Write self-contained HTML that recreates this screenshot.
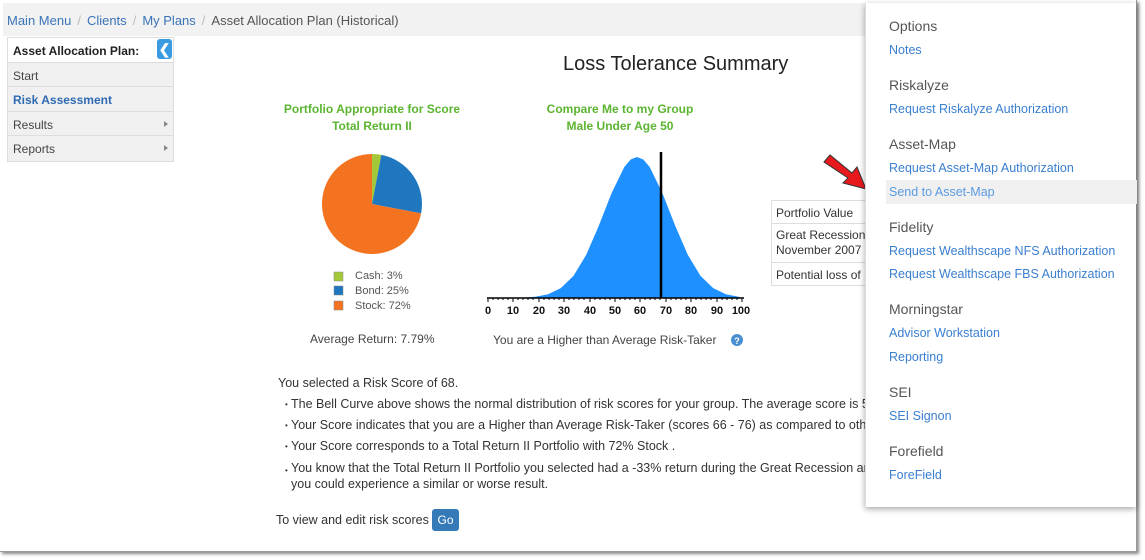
<!DOCTYPE html>
<html><head><meta charset="utf-8"><style>
*{box-sizing:border-box;margin:0;padding:0}
body{width:1145px;height:560px;background:#fff;font-family:"Liberation Sans",sans-serif;position:relative;overflow:hidden;color:#333}
.frame{position:absolute;left:0;top:0;width:1137px;height:552px;background:#fff;box-shadow:2px 2px 3px #888;border-right:1px solid #999;border-bottom:1px solid #999}
.bc{position:absolute;left:3px;top:3px;width:1130px;height:33px;background:#f2f2f2;font-size:13px;padding:10px 0 0 4px;color:#555}
.bc a{color:#3a74b8;text-decoration:none}.bc span{color:#bbb;margin:0 6px}
.side{position:absolute;left:7px;top:37px;width:167px;border:1px solid #ddd}
.side div{height:24.5px;border-bottom:1px solid #ddd;background:#f0f0f0;font-size:12px;padding:6px 0 0 5px;color:#444;position:relative}
.side div.h{background:#fff;font-weight:bold;color:#222}
.side .tri{position:absolute;right:5px;top:9px;border-left:4px solid #888;border-top:3px solid transparent;border-bottom:3px solid transparent;width:0;height:0;padding:0}
.back{position:absolute;right:1px;top:1px;width:15px;height:20px;background:#3a9be0;border-radius:3px;color:#fff;font-size:14px;text-align:center;line-height:20px}
.t{position:absolute;font-size:12px;color:#333;white-space:nowrap}
.g{color:#5cb531;font-weight:bold;font-size:12px;text-align:center;position:absolute;line-height:17px}
.panel{position:absolute;left:865px;top:3px;width:271px;height:504px;background:#fff;box-shadow:0 2px 6px rgba(0,0,0,.35);border-left:1px solid #ddd}
.panel .s{position:absolute;left:23px;font-size:14px;color:#555}
.panel .l{position:absolute;left:23px;font-size:12.5px;color:#3a7fd0}
.li{position:absolute;left:278px;font-size:12.5px;color:#333;white-space:nowrap}
.li:before{content:"•";position:absolute;left:-6px;font-size:8px;top:3px}
</style></head><body>
<div class="frame"></div>
<div class="bc"><a>Main Menu</a><span>/</span><a>Clients</a><span>/</span><a>My Plans</a><span>/</span>Asset Allocation Plan (Historical)</div>
<div class="side">
<div class="h">Asset Allocation Plan:<span class="back">&#10094;</span></div>
<div>Start</div>
<div style="color:#2f6bb3;font-weight:bold">Risk Assessment</div>
<div>Results<span class="tri"></span></div>
<div style="border-bottom:none">Reports<span class="tri"></span></div>
</div>
<div class="t" style="left:563px;top:53px;font-size:20px;color:#222">Loss Tolerance Summary</div>
<div class="g" style="left:272px;top:101px;width:200px">Portfolio Appropriate for Score<br>Total Return II</div>
<div class="g" style="left:520px;top:101px;width:200px">Compare Me to my Group<br>Male Under Age 50</div>
<svg style="position:absolute;left:0;top:0" width="1145" height="560">
<path d="M372,204 L372,154 A50,50 0 0 1 381.4,154.9Z" fill="#a3c93a"/>
<path d="M372,204 L381.4,154.9 A50,50 0 0 1 421.1,213.4Z" fill="#1f77c0"/>
<path d="M372,204 L421.1,213.4 A50,50 0 1 1 372,154Z" fill="#f37321"/>
<rect x="334" y="272" width="9" height="9" fill="#a3c93a" stroke="#888" stroke-width=".5"/>
<rect x="334" y="286" width="9" height="9" fill="#1f77c0" stroke="#888" stroke-width=".5"/>
<rect x="334" y="301" width="9" height="9" fill="#f37321" stroke="#888" stroke-width=".5"/>
<polyline fill="#1e90ff" stroke="none" points="500,298 522.7,297.6 535.4,296.8 548.1,294.2 560.8,288.1 573.5,275.9 586.2,254.9 598.9,225.5 611.6,193.1 624.3,167 630.65,159.5 637,157 643.35,159.5 649.7,167 662.4,193.1 675.1,225.5 687.8,254.9 700.5,275.9 713.2,288.1 725.9,294.2 738.6,296.8 742,298"/>
<line x1="661" y1="152" x2="661" y2="298" stroke="#000" stroke-width="2.5"/>
<line x1="487" y1="298" x2="744" y2="298" stroke="#000" stroke-width="1.5"/>
<g stroke="#000" stroke-width="1">
<path d="M488,298v4M493,298v2M498,298v2M503,298v2M508,298v2M513,298v4M518,298v2M523,298v2M528,298v2M533,298v2M539,298v4M544,298v2M549,298v2M554,298v2M559,298v2M564,298v4M569,298v2M574,298v2M579,298v2M584,298v2M590,298v4M595,298v2M600,298v2M605,298v2M610,298v2M615,298v4M620,298v2M625,298v2M630,298v2M635,298v2M640,298v4M645,298v2M650,298v2M655,298v2M660,298v2M666,298v4M671,298v2M676,298v2M681,298v2M686,298v2M691,298v4M696,298v2M701,298v2M706,298v2M711,298v2M717,298v4M722,298v2M727,298v2M732,298v2M737,298v2M742,298v4"/>
</g>
<g font-family="Liberation Sans" font-size="11" font-weight="bold" fill="#111" text-anchor="middle">
<text x="488" y="314">0</text><text x="513" y="314">10</text><text x="539" y="314">20</text><text x="564" y="314">30</text><text x="590" y="314">40</text><text x="615" y="314">50</text><text x="640" y="314">60</text><text x="666" y="314">70</text><text x="691" y="314">80</text><text x="717" y="314">90</text><text x="741" y="314">100</text>
</g>
<circle cx="737" cy="340" r="6" fill="#4a8fd0"/><text x="737" y="344" font-size="9" font-weight="bold" fill="#fff" text-anchor="middle" font-family="Liberation Sans">?</text>
<polygon points="824,162 830,155 852,173 857,167 866,189 843,183 848,178" fill="#e8191c" stroke="#333" stroke-width="1"/>
</svg>
<div class="t" style="left:355px;top:270px;font-size:11px;color:#555">Cash: 3%</div>
<div class="t" style="left:355px;top:285px;font-size:11px;color:#555">Bond: 25%</div>
<div class="t" style="left:355px;top:300px;font-size:11px;color:#555">Stock: 72%</div>
<div class="t" style="left:310px;top:332px;color:#444">Average Return: 7.79%</div>
<div class="t" style="left:493px;top:333px;color:#444">You are a Higher than Average Risk-Taker</div>
<div style="position:absolute;left:771px;top:200px;width:100px;height:86px;border:1px solid #ddd;font-size:12px;color:#333">
<div style="height:23px;border-bottom:1px solid #ddd;padding:5px 4px">Portfolio Value</div>
<div style="height:39px;border-bottom:1px solid #ddd;padding:4px 4px;line-height:15px">Great Recession<br>November 2007</div>
<div style="padding:5px 4px">Potential loss of</div></div>
<div class="t" style="left:278px;top:376px;font-size:12.5px">You selected a Risk Score of 68.</div>
<div class="li" style="left:291px;top:397px">The Bell Curve above shows the normal distribution of risk scores for your group. The average score is 5</div>
<div class="li" style="left:291px;top:418px">Your Score indicates that you are a Higher than Average Risk-Taker (scores 66 - 76) as compared to othe</div>
<div class="li" style="left:291px;top:439px">Your Score corresponds to a Total Return II Portfolio with 72% Stock .</div>
<div class="li" style="left:291px;top:460px;line-height:16px">You know that the Total Return II Portfolio you selected had a -33% return during the Great Recession ar<br>you could experience a similar or worse result.</div>
<div class="t" style="left:276px;top:513px;font-size:12.5px">To view and edit risk scores</div>
<div style="position:absolute;left:432px;top:509px;width:27px;height:22px;background:#337ab7;border-radius:3px;color:#fff;font-size:12px;text-align:center;line-height:22px">Go</div>
<div class="panel">
<div class="s" style="top:15px">Options</div><div class="l" style="top:40px">Notes</div>
<div class="s" style="top:74px">Riskalyze</div><div class="l" style="top:99px">Request Riskalyze Authorization</div>
<div class="s" style="top:133px">Asset-Map</div><div class="l" style="top:158px">Request Asset-Map Authorization</div>
<div style="position:absolute;left:20px;top:177px;width:251px;height:24px;background:#f0f0f0"></div>
<div class="l" style="top:182px;color:#5a9be0">Send to Asset-Map</div>
<div class="s" style="top:216px">Fidelity</div><div class="l" style="top:241px">Request Wealthscape NFS Authorization</div>
<div class="l" style="top:264px">Request Wealthscape FBS Authorization</div>
<div class="s" style="top:298px">Morningstar</div><div class="l" style="top:323px">Advisor Workstation</div>
<div class="l" style="top:347px">Reporting</div>
<div class="s" style="top:381px">SEI</div><div class="l" style="top:406px">SEI Signon</div>
<div class="s" style="top:440px">Forefield</div><div class="l" style="top:465px">ForeField</div>
</div>
</body></html>
